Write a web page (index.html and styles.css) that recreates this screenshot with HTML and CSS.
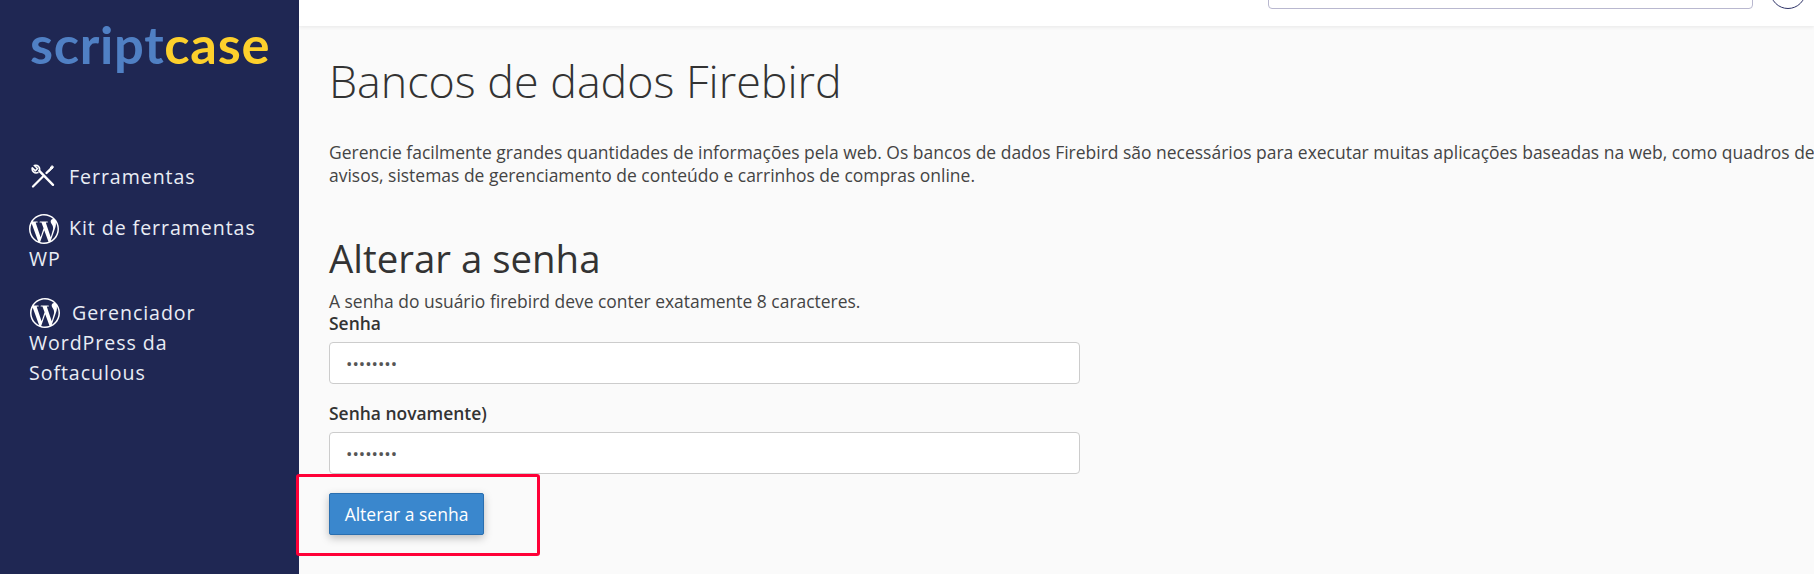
FILE: index.html
```html
<!DOCTYPE html>
<html lang="pt-BR">
<head>
<meta charset="utf-8">
<title>Bancos de dados Firebird</title>
<link rel="stylesheet" href="styles.css">
</head>
<body>
<aside class="sidebar">
  <div class="logo"><span class="logo-a">script</span><span class="logo-b">case</span></div>
  <nav class="nav">
    <a class="nav-item"><svg class="ico-tools" viewBox="0 0 24 24"><g fill="none" stroke="#fff" stroke-linecap="round" stroke-linejoin="round"><path d="M2 22.500 L12 12.500" stroke-width="2.200"/><path d="M15.500 9 L18.500 6" stroke-width="2.400"/><path d="M18 6.500 L20 2.500 C21.500 1 23 2.500 22 4 L18.500 7 Z" fill="#fff" stroke-width="1"/><path d="M8.300 6.800 L22 20.800" stroke-width="2.400"/><path d="M8.400 6.500 C9.500 3 6.500 .5 3.300 1.500 L6.500 4.500 L4.500 6.800 L1.300 3.800 C.5 7 3.500 10 6.900 8.600" stroke-width="1.600"/></g></svg>Ferramentas</a>
    <a class="nav-item"><svg class="ico-wp" viewBox="0 0 24 24"><path fill="#fff" d="M21.469 6.825c.84 1.537 1.318 3.3 1.318 5.175 0 3.979-2.156 7.456-5.363 9.325l3.295-9.527c.615-1.54.82-2.771.82-3.864 0-.405-.026-.78-.07-1.11m-7.981.105c.647-.03 1.232-.105 1.232-.105.582-.075.514-.93-.067-.899 0 0-1.755.135-2.88.135-1.064 0-2.85-.15-2.85-.15-.585-.03-.661.855-.075.885 0 0 .54.061 1.125.09l1.68 4.605-2.37 7.08L5.354 6.9c.649-.03 1.234-.1 1.234-.1.585-.075.516-.93-.065-.896 0 0-1.746.138-2.874.138-.2 0-.438-.008-.69-.015C4.911 3.15 8.235 1.215 12 1.215c2.809 0 5.365 1.072 7.286 2.833-.046-.003-.091-.009-.141-.009-1.06 0-1.812.923-1.812 1.914 0 .89.513 1.643 1.06 2.531.411.72.89 1.643.89 2.977 0 .915-.354 1.994-.821 3.479l-1.075 3.585-3.9-11.61.001.014zM12 22.784c-1.059 0-2.081-.153-3.048-.437l3.237-9.406 3.315 9.087c.024.053.05.101.078.149-1.12.393-2.325.609-3.582.609M1.211 12c0-1.564.336-3.05.935-4.39L7.29 21.709C3.694 19.96 1.212 16.271 1.211 12M12 0C5.385 0 0 5.385 0 12s5.385 12 12 12 12-5.385 12-12S18.615 0 12 0"/></svg>Kit de ferramentas WP</a>
    <a class="nav-item nav-item-wide"><svg class="ico-wp ico-wp-b" viewBox="0 0 24 24"><path fill="#fff" d="M21.469 6.825c.84 1.537 1.318 3.3 1.318 5.175 0 3.979-2.156 7.456-5.363 9.325l3.295-9.527c.615-1.54.82-2.771.82-3.864 0-.405-.026-.78-.07-1.11m-7.981.105c.647-.03 1.232-.105 1.232-.105.582-.075.514-.93-.067-.899 0 0-1.755.135-2.88.135-1.064 0-2.85-.15-2.85-.15-.585-.03-.661.855-.075.885 0 0 .54.061 1.125.09l1.68 4.605-2.37 7.08L5.354 6.9c.649-.03 1.234-.1 1.234-.1.585-.075.516-.93-.065-.896 0 0-1.746.138-2.874.138-.2 0-.438-.008-.69-.015C4.911 3.15 8.235 1.215 12 1.215c2.809 0 5.365 1.072 7.286 2.833-.046-.003-.091-.009-.141-.009-1.06 0-1.812.923-1.812 1.914 0 .89.513 1.643 1.06 2.531.411.72.89 1.643.89 2.977 0 .915-.354 1.994-.821 3.479l-1.075 3.585-3.9-11.61.001.014zM12 22.784c-1.059 0-2.081-.153-3.048-.437l3.237-9.406 3.315 9.087c.024.053.05.101.078.149-1.12.393-2.325.609-3.582.609M1.211 12c0-1.564.336-3.05.935-4.39L7.29 21.709C3.694 19.96 1.212 16.271 1.211 12M12 0C5.385 0 0 5.385 0 12s5.385 12 12 12 12-5.385 12-12S18.615 0 12 0"/></svg>Gerenciador WordPress da Softaculous</a>
  </nav>
</aside>
<div class="main">
  <header class="topbar">
    <div class="search"></div>
    <div class="avatar"></div>
  </header>
  <main class="content">
    <h1 class="title">Bancos de dados Firebird</h1>
    <p class="desc">Gerencie facilmente grandes quantidades de informações pela web. Os bancos de dados Firebird são necessários para executar muitas aplicações baseadas na web, como quadros de<br>avisos, sistemas de gerenciamento de conteúdo e carrinhos de compras online.</p>
    <h2 class="subtitle">Alterar a senha</h2>
    <p class="hint">A senha do usuário firebird deve conter exatamente 8 caracteres.</p>
    <form class="form">
      <label class="label">Senha</label>
      <input class="input" type="password" value="12345678">
      <label class="label label-second">Senha novamente)</label>
      <input class="input" type="password" value="12345678">
      <div class="actions">
        <button class="btn" type="button">Alterar a senha</button>
        <span class="highlight"></span>
      </div>
    </form>
  </main>
</div>
</body>
</html>
```
FILE: styles.css
```css
* { box-sizing: border-box; }
html, body { margin: 0; height: 574px; overflow: hidden; }
body {
  display: flex;
  font-family: "Open Sans", sans-serif;
  font-size: 17.450px;
  color: #333;
  background: #fafafa;
}
.sidebar {
  flex: 0 0 299px;
  height: 574px;
  background: #1f2753;
  color: #e9edf5;
}
.logo {
  padding: 14px 0 0 30px;
  height: 162px;
  font-family: Lato, sans-serif;
  font-weight: 700;
  font-size: 52.500px;
  line-height: 60px;
  letter-spacing: 0.7px;
}
.logo-a { color: #5080c4; }
.logo-b { color: #fdd02c; }
.nav-item {
  display: block;
  padding: 0 29px;
  font-size: 19.600px;
  line-height: 30px;
  letter-spacing: 0.93px;
  margin-bottom: 21px;
}
.nav-item-wide { margin-top: 24px; padding-right: 60px; }
.ico-tools {
  width: 24px;
  height: 24px;
  margin: 0 14px 0 2px;
  vertical-align: -4px;
}
.ico-wp {
  width: 30px;
  height: 30px;
  margin-right: 10px;
  vertical-align: -9px;
}
.ico-wp-b { margin: 0 12px 0 1px; vertical-align: -8px; }
.main {
  flex: 1;
  min-width: 0;
  display: flex;
  flex-direction: column;
}
.topbar {
  flex: 0 0 26px;
  background: #fff;
  box-shadow: 0 1px 4px rgba(0,0,0,.08);
  display: flex;
  justify-content: flex-end;
  align-items: flex-end;
  padding: 0 8px 17px 0;
  overflow: hidden;
  position: relative;
}
.search {
  flex: 0 0 485px;
  height: 40px;
  border: 1px solid #b9b8cf;
  border-radius: 4px;
  background: #fff;
}
.avatar {
  flex: 0 0 36px;
  height: 36px;
  margin-left: 17px;
  border: 1px solid #2f3468;
  border-radius: 50%;
}
.content {
  flex: 1;
  padding: 0 0 0 30px;
  white-space: nowrap;
}
.title {
  margin: 25px 0 0;
  font-weight: 300;
  font-size: 44.800px;
  line-height: 60px;
  color: #333;
}
.desc {
  margin: 30px 0 0;
  font-size: 17.480px;
  line-height: 23px;
  color: #444;
}
.subtitle {
  margin: 46px 0 0;
  font-weight: 400;
  font-size: 38.400px;
  line-height: 50px;
  color: #333;
}
.hint {
  margin: 7px 0 0;
  line-height: 22px;
  color: #444;
}
.form { display: flex; flex-direction: column; align-items: flex-start; }
.label {
  font-weight: 600;
  line-height: 22px;
  color: #333;
}
.label-second { margin-top: 18px; }
.input {
  width: 751px;
  height: 42px;
  margin-top: 8px;
  padding: 0 16px;
  border: 1px solid #ccc;
  border-radius: 4px;
  background: #fff;
  color: #555;
  font-family: "Open Sans", sans-serif;
  font-size: 17px;
}
.actions {
  position: relative;
  margin-top: 19px;
}
.btn {
  display: block;
  width: 155px;
  height: 42px;
  border: 1px solid #2a6fb0;
  border-radius: 2px;
  background: #3a87cd;
  color: #fff;
  font-family: "Open Sans", sans-serif;
  font-size: 17.500px;
  box-shadow: 0 3px 8px rgba(0,0,0,.25);
}
.highlight {
  position: absolute;
  left: -33px;
  top: -19px;
  width: 244px;
  height: 82px;
  border: 3.500px solid #ff0037;
  border-radius: 3px;
}
```
